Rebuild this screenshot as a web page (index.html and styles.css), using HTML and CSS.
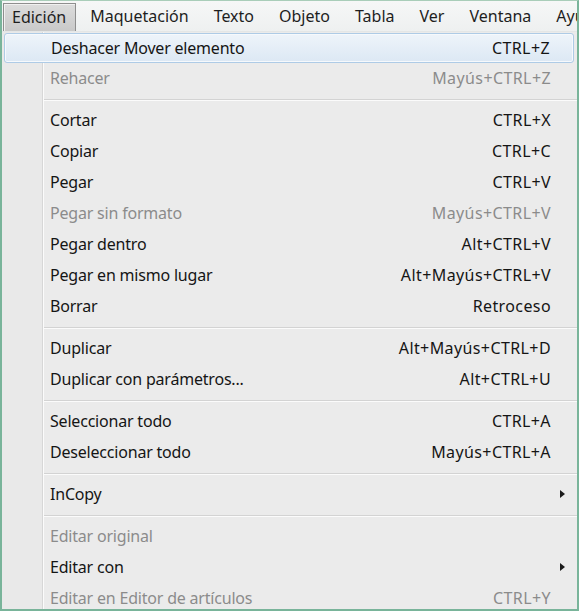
FILE: index.html
```html
<!DOCTYPE html>
<html lang="es">
<head>
<meta charset="utf-8">
<title>Menú Edición</title>
<link rel="stylesheet" href="styles.css">
</head>
<body>
<div class="screen">
  <div class="menubar">
    <span class="mb-item active">Edición</span>
    <span class="mb-item">Maquetación</span>
    <span class="mb-item">Texto</span>
    <span class="mb-item">Objeto</span>
    <span class="mb-item">Tabla</span>
    <span class="mb-item">Ver</span>
    <span class="mb-item">Ventana</span>
    <span class="mb-item">Ayuda</span>
  </div>
  <div class="menu">
    <div class="item hover"><span class="label">Deshacer Mover elemento</span><span class="key">CTRL+Z</span></div>
    <div class="item disabled"><span class="label">Rehacer</span><span class="key">Mayús+CTRL+Z</span></div>
    <div class="sep"></div>
    <div class="item"><span class="label">Cortar</span><span class="key">CTRL+X</span></div>
    <div class="item"><span class="label">Copiar</span><span class="key">CTRL+C</span></div>
    <div class="item"><span class="label">Pegar</span><span class="key">CTRL+V</span></div>
    <div class="item disabled"><span class="label">Pegar sin formato</span><span class="key">Mayús+CTRL+V</span></div>
    <div class="item"><span class="label">Pegar dentro</span><span class="key">Alt+CTRL+V</span></div>
    <div class="item"><span class="label">Pegar en mismo lugar</span><span class="key">Alt+Mayús+CTRL+V</span></div>
    <div class="item"><span class="label">Borrar</span><span class="key">Retroceso</span></div>
    <div class="sep"></div>
    <div class="item"><span class="label">Duplicar</span><span class="key">Alt+Mayús+CTRL+D</span></div>
    <div class="item"><span class="label">Duplicar con parámetros...</span><span class="key">Alt+CTRL+U</span></div>
    <div class="sep"></div>
    <div class="item"><span class="label">Seleccionar todo</span><span class="key">CTRL+A</span></div>
    <div class="item"><span class="label">Deseleccionar todo</span><span class="key">Mayús+CTRL+A</span></div>
    <div class="sep"></div>
    <div class="item sub"><span class="label">InCopy</span><span class="arrow"></span></div>
    <div class="sep"></div>
    <div class="item disabled"><span class="label">Editar original</span></div>
    <div class="item sub"><span class="label">Editar con</span><span class="arrow"></span></div>
    <div class="item disabled"><span class="label">Editar en Editor de artículos</span><span class="key">CTRL+Y</span></div>
  </div>
</div>
</body>
</html>
```

FILE: styles.css
```css
html, body {
  margin: 0;
  padding: 0;
  background: #ffffff;
}

.screen {
  width: 579px;
  height: 611px;
  box-sizing: border-box;
  border-left: 2px solid #79b49a;
  border-right: 2px solid #79b49a;
  border-bottom: 2px solid #79b49a;
  border-top: 1px solid #a9cdb9;
  overflow: hidden;
  display: flex;
  flex-direction: column;
  font-family: "Noto Sans", "Open Sans", sans-serif;
  font-size: 16px;
  color: #151515;
}

.menubar {
  height: 31px;
  flex: none;
  display: flex;
  align-items: stretch;
  padding: 2px 0 0 1px;
  box-sizing: border-box;
  background: linear-gradient(#f6f7f7, #eef0f0);
  border-bottom: 1px solid #e4e6e6;
  white-space: nowrap;
}

.mb-item {
  display: flex;
  align-items: center;
  padding: 0 12px 2px 13px;
  color: #1e1e1e;
}

.mb-item.active {
  padding: 0 9px 2px 8px;
  margin-right: 1px;
  background: linear-gradient(#dcdcdc, #c9c9c9);
  border: 1px solid #8e8e8e;
  border-bottom: none;
  box-shadow: inset 1px 1px 0 #f0f0f0;
}

.menu {
  flex: 1;
  display: flex;
  flex-direction: column;
  background:
    linear-gradient(to right,
      #e9e9e9 0, #e9e9e9 40px,
      #d7d7d7 40px, #d7d7d7 41px,
      #fbfbfb 41px, #fbfbfb 42px,
      #ebebeb 42px);
}

.item {
  height: 31px;
  flex: none;
  display: flex;
  align-items: center;
  box-sizing: border-box;
  padding: 0 26px 2px 48px;
}

.item .label {
  flex: 1;
  white-space: nowrap;
  letter-spacing: -0.2px;
}

.item .key {
  white-space: nowrap;
  letter-spacing: 0.4px;
}

.item.disabled {
  color: #8b8b8b;
}

.item.hover {
  margin: 1px 3px 0 2px;
  height: 30px;
  padding: 0 23px 1px 46px;
  border: 1px solid #aecbe6;
  border-radius: 3px;
  background: linear-gradient(#eef4fa, #dce8f4);
  box-shadow: inset 0 0 0 1px #f6f9fc;
}

.item.sub {
  padding-right: 12px;
}

.arrow {
  width: 0;
  height: 0;
  border-top: 4px solid transparent;
  border-bottom: 4px solid transparent;
  border-left: 5px solid #1a1a1a;
}

.sep {
  height: 11px;
  flex: none;
  box-sizing: border-box;
  margin-left: 42px;
  padding-top: 5px;
}

.sep::before {
  content: "";
  display: block;
  height: 1px;
  background: #d3d3d3;
  border-bottom: 1px solid #fbfbfb;
}
```
